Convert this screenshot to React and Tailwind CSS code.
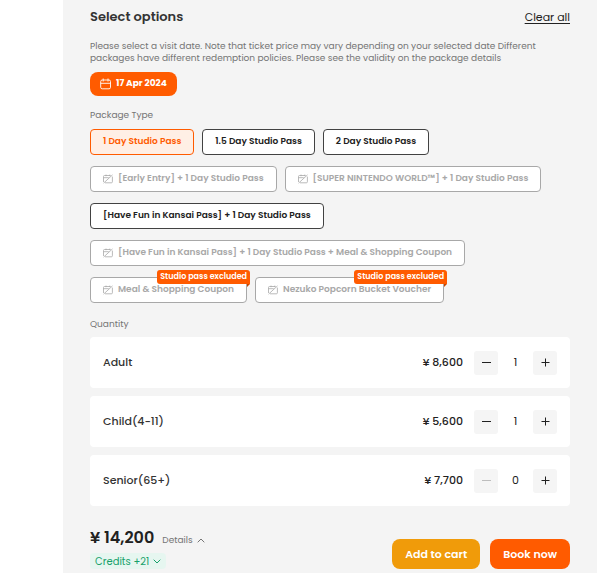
import { useState } from 'react'

const PACKAGES = [
  { name: '1 Day Studio Pass' },
  { name: '1.5 Day Studio Pass' },
  { name: '2 Day Studio Pass' },
  { name: '[Early Entry] + 1 Day Studio Pass', disabled: true },
  { name: '[SUPER NINTENDO WORLD™] + 1 Day Studio Pass', disabled: true },
  { name: '[Have Fun in Kansai Pass] + 1 Day Studio Pass' },
  {
    name: '[Have Fun in Kansai Pass] + 1 Day Studio Pass + Meal & Shopping Coupon',
    disabled: true,
  },
  { name: 'Meal & Shopping Coupon', disabled: true, badge: 'Studio pass excluded' },
  { name: 'Nezuko Popcorn Bucket Voucher', disabled: true, badge: 'Studio pass excluded' },
]

const TICKETS = [
  { id: 'adult', name: 'Adult', price: 8600 },
  { id: 'child', name: 'Child(4-11)', price: 5600 },
  { id: 'senior', name: 'Senior(65+)', price: 7700 },
]

const yen = (n) => `¥ ${n.toLocaleString('en-US')}`

export default function App() {
  const [selected, setSelected] = useState(PACKAGES[0].name)
  const [counts, setCounts] = useState({ adult: 1, child: 1, senior: 0 })

  const total = TICKETS.reduce((sum, t) => sum + t.price * counts[t.id], 0)
  const change = (id, by) =>
    setCounts((c) => ({ ...c, [id]: Math.max(0, c[id] + by) }))
  const clear = () => {
    setSelected('')
    setCounts({ adult: 0, child: 0, senior: 0 })
  }

  return (
    <div className="min-h-screen bg-white pl-[63px] pr-2 font-[Poppins,Inter,sans-serif] text-[#212121]">
      <main className="flex min-h-screen flex-col bg-[#f4f4f4] px-[27px] pb-1 pt-[7px]">
        <header className="flex items-center justify-between">
          <h1 className="text-[13px] font-semibold leading-5 text-[#333]">Select options</h1>
          <button type="button" onClick={clear} className="text-[11px] leading-4 underline underline-offset-2">
            Clear all
          </button>
        </header>

        <p className="mt-[13px] text-[9px] leading-3 text-[#757575]">
          Please select a visit date. Note that ticket price may vary depending on your selected date Different
          packages have different redemption policies. Please see the validity on the package details
        </p>

        <button
          type="button"
          className="mt-2 flex h-6 items-center gap-1 self-start rounded-lg bg-[#ff5b00] px-[10px] text-[9px] font-bold text-white"
        >
          <CalendarIcon />
          17 Apr 2024
        </button>

        <h2 className="mt-[11px] text-[9px] leading-4 text-[#757575]">Package Type</h2>
        <div className="mt-[6px] flex flex-wrap gap-x-2 gap-y-[11px]">
          {PACKAGES.map((p) => (
            <PackageButton
              key={p.name}
              item={p}
              active={p.name === selected}
              onClick={() => setSelected(p.name)}
            />
          ))}
        </div>

        <h2 className="mt-[13px] text-[9px] leading-4 text-[#757575]">Quantity</h2>
        <ul className="mt-[5px] space-y-2">
          {TICKETS.map((t) => (
            <TicketRow key={t.id} ticket={t} count={counts[t.id]} onChange={change} />
          ))}
        </ul>

        <footer className="mt-5 flex items-end justify-between">
          <div>
            <div className="flex items-center gap-2">
              <strong className="text-base font-semibold leading-6">{yen(total)}</strong>
              <button type="button" className="mt-1 flex items-center gap-1 text-[9px] leading-4 text-[#757575]">
                Details
                <Chevron up />
              </button>
            </div>
            <button
              type="button"
              className="mt-[3px] flex h-4 items-center gap-1 rounded-sm bg-[#e6f6f0] px-[5px] text-[10px] text-[#16a06a]"
            >
              Credits +21
              <Chevron />
            </button>
          </div>
          <div className="flex gap-[10px] text-[11px] font-semibold text-white">
            <button type="button" className="h-[30px] rounded-lg bg-[#f09b0a] px-[13px]">
              Add to cart
            </button>
            <button type="button" className="h-[30px] rounded-lg bg-[#ff5b00] px-[13px]">
              Book now
            </button>
          </div>
        </footer>
      </main>
    </div>
  )
}

function PackageButton({ item, active, onClick }) {
  let tone = 'border-[#424242] bg-white text-[#212121]'
  if (item.disabled) tone = 'border-[#a8a8a8] bg-white text-[#a8a8a8]'
  else if (active) tone = 'border-[#ff5b00] bg-[#ffefe5] text-[#ff5b00]'

  return (
    <button
      type="button"
      disabled={item.disabled}
      aria-pressed={active}
      onClick={onClick}
      className={`relative flex h-[26px] items-center gap-[5px] whitespace-nowrap rounded-[4px] border px-3 text-[9px] font-semibold ${tone}`}
    >
      {item.disabled && <UnavailableIcon />}
      {item.name}
      {item.badge && (
        <span className="absolute -right-1 -top-2 h-[14px] rounded-[3px] rounded-br-none bg-[#ff5b00] px-[3px] text-[8px] font-semibold leading-[14px] text-white">
          {item.badge}
          {/* folded ribbon corner */}
          <svg className="absolute right-0 top-full" width="3" height="3" viewBox="0 0 3 3" aria-hidden="true">
            <path d="M0 0h3L0 3z" fill="#c84400" />
          </svg>
        </span>
      )}
    </button>
  )
}

function TicketRow({ ticket, count, onChange }) {
  return (
    <li className="flex h-[51px] items-center rounded-[4px] bg-white px-[13px]">
      <span className="flex-1 text-[11px] font-medium text-[#333]">{ticket.name}</span>
      <span className="mr-[11px] text-[11px] font-medium">{yen(ticket.price)}</span>
      <StepButton
        label={`Remove one ${ticket.name}`}
        disabled={count === 0}
        onClick={() => onChange(ticket.id, -1)}
      />
      <output className="w-[35px] text-center text-[11px]">{count}</output>
      <StepButton plus label={`Add one ${ticket.name}`} onClick={() => onChange(ticket.id, 1)} />
    </li>
  )
}

function StepButton({ plus, label, disabled, onClick }) {
  return (
    <button
      type="button"
      aria-label={label}
      disabled={disabled}
      onClick={onClick}
      className="flex size-6 items-center justify-center rounded-[3px] bg-[#f5f5f5] text-[#212121] disabled:text-[#bdbdbd]"
    >
      <svg width="9" height="9" viewBox="0 0 9 9" stroke="currentColor" aria-hidden="true">
        <path d={plus ? 'M.5 4.5h8M4.5.5v8' : 'M0 4.5h9'} />
      </svg>
    </button>
  )
}

function CalendarIcon() {
  return (
    <svg width="12" height="12" viewBox="0 0 12 12" fill="none" stroke="currentColor" strokeWidth=".9" aria-hidden="true">
      <rect x=".7" y="2" width="9.8" height="8.8" rx="1.5" />
      <path d="M.7 5.3h9.8M3.2.5v3M8 .5v3" />
    </svg>
  )
}

// calendar with a slash through it
function UnavailableIcon() {
  return (
    <svg width="10" height="10" viewBox="0 0 10 10" fill="none" stroke="currentColor" strokeWidth=".8" aria-hidden="true">
      <path d="M7.6 1.5H1.5Q.5 1.5.5 2.5V8M2 8.8H8.4Q9.4 8.8 9.4 7.8V2.6M.5 3.7H5.8M3 .6v1.6M6.8.6v1.6M.6 9.1 9.5.9" />
    </svg>
  )
}

function Chevron({ up }) {
  return (
    <svg width="8" height="5" viewBox="0 0 8 5" fill="none" stroke="currentColor" aria-hidden="true">
      <path d={up ? 'M.7 4.3 4 1l3.3 3.3' : 'M.7.7 4 4 7.3.7'} />
    </svg>
  )
}
